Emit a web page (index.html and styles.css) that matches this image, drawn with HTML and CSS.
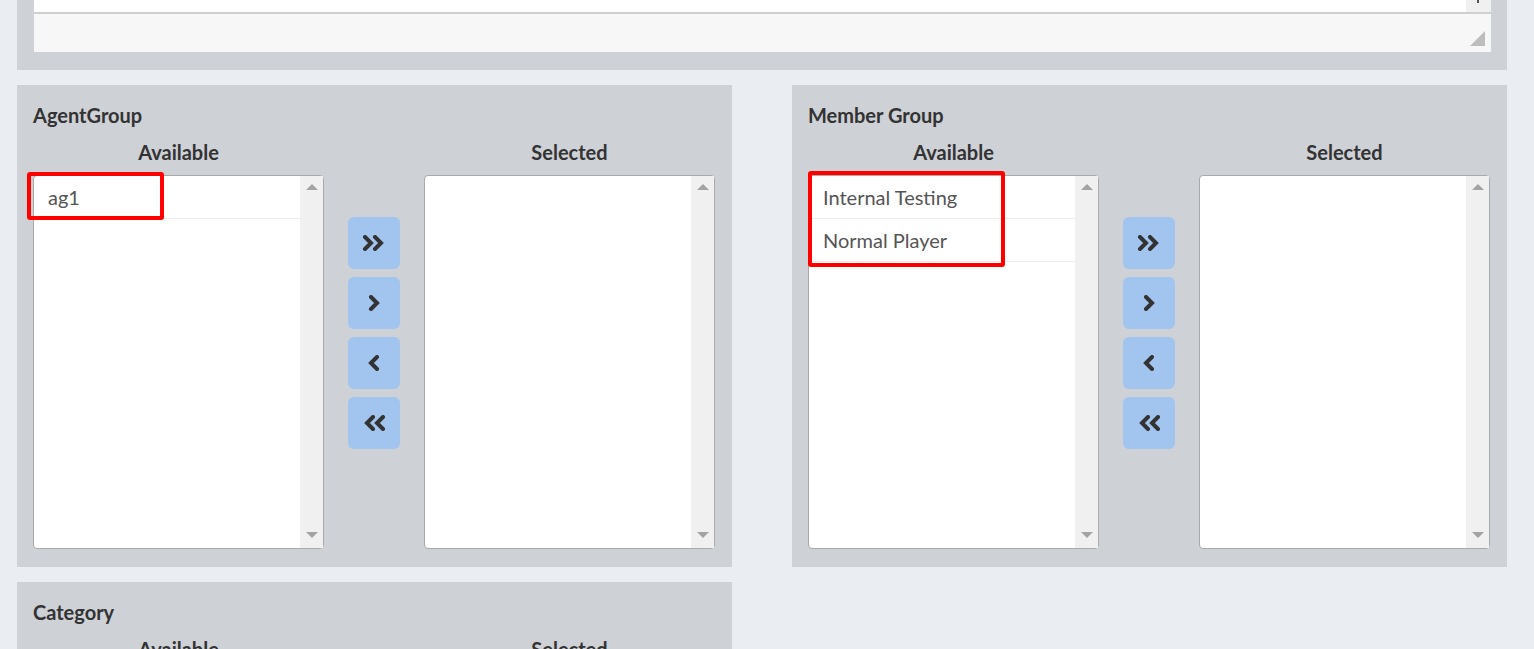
FILE: index.html
```html
<!DOCTYPE html>
<html>
<head>
<meta charset="utf-8">
<link rel="stylesheet" href="styles.css">
</head>
<body>
<div class="top-panel">
  <div class="ta-tail"><div class="ta-scroll"><span class="ta-arrow"></span></div></div>
  <div class="ta-foot"><span class="grip"></span></div>
</div>

<div class="grid">
  <section class="panel">
    <h3 class="panel-title">AgentGroup</h3>
    <div class="dual">
      <div class="col">
        <div class="col-head">Available</div>
        <div class="listbox">
          <div class="items">
            <div class="item">ag1</div>
          </div>
          <div class="sbar"><span class="up"></span><span class="down"></span></div>
          <div class="mark mark-a"></div>
        </div>
      </div>
      <div class="btns">
        <button class="mv"><svg viewBox="0 0 24 16" width="24" height="16"><path d="M3 2l6 6-6 6M13 2l6 6-6 6"/></svg></button>
        <button class="mv"><svg viewBox="0 0 14 16" width="14" height="16"><path d="M4 2l6 6-6 6"/></svg></button>
        <button class="mv"><svg viewBox="0 0 14 16" width="14" height="16"><path d="M10 2l-6 6 6 6"/></svg></button>
        <button class="mv"><svg viewBox="0 0 24 16" width="24" height="16"><path d="M11 2l-6 6 6 6M21 2l-6 6 6 6"/></svg></button>
      </div>
      <div class="col">
        <div class="col-head">Selected</div>
        <div class="listbox">
          <div class="items"></div>
          <div class="sbar"><span class="up"></span><span class="down"></span></div>
        </div>
      </div>
    </div>
  </section>

  <section class="panel">
    <h3 class="panel-title">Member Group</h3>
    <div class="dual">
      <div class="col">
        <div class="col-head">Available</div>
        <div class="listbox">
          <div class="items">
            <div class="item">Internal Testing</div>
            <div class="item">Normal Player</div>
          </div>
          <div class="sbar"><span class="up"></span><span class="down"></span></div>
          <div class="mark mark-b"></div>
        </div>
      </div>
      <div class="btns">
        <button class="mv"><svg viewBox="0 0 24 16" width="24" height="16"><path d="M3 2l6 6-6 6M13 2l6 6-6 6"/></svg></button>
        <button class="mv"><svg viewBox="0 0 14 16" width="14" height="16"><path d="M4 2l6 6-6 6"/></svg></button>
        <button class="mv"><svg viewBox="0 0 14 16" width="14" height="16"><path d="M10 2l-6 6 6 6"/></svg></button>
        <button class="mv"><svg viewBox="0 0 24 16" width="24" height="16"><path d="M11 2l-6 6 6 6M21 2l-6 6 6 6"/></svg></button>
      </div>
      <div class="col">
        <div class="col-head">Selected</div>
        <div class="listbox">
          <div class="items"></div>
          <div class="sbar"><span class="up"></span><span class="down"></span></div>
        </div>
      </div>
    </div>
  </section>

  <section class="panel">
    <h3 class="panel-title">Category</h3>
    <div class="dual">
      <div class="col">
        <div class="col-head">Available</div>
        <div class="listbox">
          <div class="items"></div>
          <div class="sbar"><span class="up"></span><span class="down"></span></div>
        </div>
      </div>
      <div class="btns">
        <button class="mv"><svg viewBox="0 0 24 16" width="24" height="16"><path d="M3 2l6 6-6 6M13 2l6 6-6 6"/></svg></button>
        <button class="mv"><svg viewBox="0 0 14 16" width="14" height="16"><path d="M4 2l6 6-6 6"/></svg></button>
        <button class="mv"><svg viewBox="0 0 14 16" width="14" height="16"><path d="M10 2l-6 6 6 6"/></svg></button>
        <button class="mv"><svg viewBox="0 0 24 16" width="24" height="16"><path d="M11 2l-6 6 6 6M21 2l-6 6 6 6"/></svg></button>
      </div>
      <div class="col">
        <div class="col-head">Selected</div>
        <div class="listbox">
          <div class="items"></div>
          <div class="sbar"><span class="up"></span><span class="down"></span></div>
        </div>
      </div>
    </div>
  </section>
</div>
</body>
</html>
```

FILE: styles.css
```css
html, body {
  margin: 0;
  padding: 0;
}
body {
  background: #eaedf2;
  padding: 0 27px 0 17px;
  font-family: "Lato", "Open Sans", sans-serif;
  color: #333;
  overflow: hidden;
}

.top-panel {
  background: #ced1d6;
  padding: 0 16px 18px 17px;
}
.ta-tail {
  height: 12px;
  background: #fff;
  display: flex;
  justify-content: flex-end;
}
.ta-scroll {
  width: 25px;
  background: #f0f0f0;
  position: relative;
}
.ta-arrow {
  position: absolute;
  left: 11px;
  top: 0;
  width: 2px;
  height: 3px;
  background: #555;
}
.ta-foot {
  height: 32px;
  border-top: 2px solid #cfcfcf;
  background: #f7f7f7;
  display: flex;
  justify-content: flex-end;
  align-items: flex-end;
  padding: 0 6px 6px 0;
}
.grip {
  width: 0;
  height: 0;
  border-left: 15px solid transparent;
  border-bottom: 15px solid #bdbdbd;
}

.grid {
  display: grid;
  grid-template-columns: 715px 715px;
  column-gap: 60px;
  row-gap: 15px;
  margin-top: 15px;
}

.panel {
  background: #ced1d6;
  padding: 19px 17px 18px 16px;
}
.panel-title {
  margin: 0;
  font-size: 20px;
  line-height: 22px;
  font-weight: 700;
  color: #333;
}
.dual {
  display: grid;
  grid-template-columns: 291px 100px 291px;
  margin-top: 15px;
}
.col-head {
  text-align: center;
  font-weight: 700;
  font-size: 20px;
  line-height: 22px;
  color: #333;
  margin-bottom: 12px;
}
.listbox {
  position: relative;
  height: 372px;
  border: 1px solid #a9a9a9;
  border-radius: 4px;
  background: #fff;
  display: flex;
}
.items {
  flex: 1;
}
.item {
  height: 42px;
  line-height: 42px;
  padding-left: 14px;
  font-size: 20px;
  color: #555;
  border-bottom: 1px solid #ececec;
}
.sbar {
  width: 23px;
  background: #f0f0f0;
  display: flex;
  flex-direction: column;
  justify-content: space-between;
  align-items: center;
  padding: 8px 0 10px;
}
.up {
  width: 0;
  height: 0;
  border-left: 6px solid transparent;
  border-right: 6px solid transparent;
  border-bottom: 6px solid #a3a3a3;
}
.down {
  width: 0;
  height: 0;
  border-left: 6px solid transparent;
  border-right: 6px solid transparent;
  border-top: 6px solid #a3a3a3;
}
.mark {
  position: absolute;
  border: 4px solid #ff0000;
  border-radius: 3px;
  box-sizing: border-box;
}
.mark-a {
  left: -7px;
  top: -4px;
  width: 137px;
  height: 48px;
}
.mark-b {
  left: -1px;
  top: -5px;
  width: 197px;
  height: 96px;
}

.btns {
  display: flex;
  flex-direction: column;
  align-items: center;
  gap: 8px;
  padding-top: 76px;
}
.mv {
  width: 52px;
  height: 52px;
  border: 0;
  border-radius: 6px;
  background: #a1c5ef;
  display: flex;
  align-items: center;
  justify-content: center;
  padding: 0;
}
.mv svg path {
  fill: none;
  stroke: #333;
  stroke-width: 4;
  stroke-linecap: round;
  stroke-linejoin: miter;
}
```
